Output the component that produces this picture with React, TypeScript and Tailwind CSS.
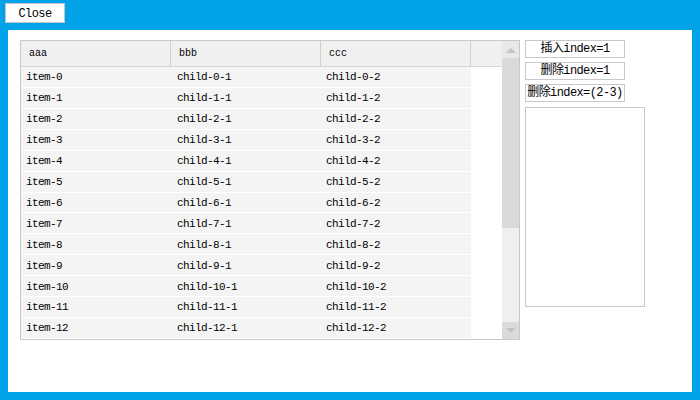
import React from "react";

const mono = { fontFamily: '"Liberation Mono", "Noto Sans CJK SC", monospace' };

const rows = Array.from({ length: 13 }, (_, i) => ({
  a: `item-${i}`,
  b: `child-${i}-1`,
  c: `child-${i}-2`,
}));

function ArrowUp() {
  return (
    <svg width="10" height="6" viewBox="0 0 10 6">
      <path d="M0 6 L5 1 L10 6 Z" fill="#c4c4c4" />
    </svg>
  );
}

function ArrowDown() {
  return (
    <svg width="10" height="6" viewBox="0 0 10 6">
      <path d="M0 0 L10 0 L5 5 Z" fill="#c4c4c4" />
    </svg>
  );
}

function Grid() {
  return (
    <div className="flex h-[300px] w-[500px] border border-[#c8c8c8] bg-white">
      <div className="flex flex-1 flex-col">
        <div className="flex h-[26px] border-b border-[#d6d6d6] bg-[#f0f0f0] text-[10px] text-black">
          {["aaa", "bbb", "ccc"].map((h) => (
            <div
              key={h}
              className="flex w-[150px] items-center border-r border-[#d0d0d0] pl-[8px] pt-[1px]"
            >
              {h}
            </div>
          ))}
          <div className="flex-1" />
        </div>
        {rows.map((r) => (
          <div key={r.a} className="flex h-[21px] border-b border-white text-[11px] tracking-[-0.6px] text-black">
            <div className="flex w-[150px] items-center bg-[#f4f4f4] pl-[5px] pt-[1px]">{r.a}</div>
            <div className="flex w-[150px] items-center bg-[#f4f4f4] pl-[6px] pt-[1px]">{r.b}</div>
            <div className="flex w-[150px] items-center bg-[#f4f4f4] pl-[5px] pt-[1px]">{r.c}</div>
            <div className="flex-1" />
          </div>
        ))}
      </div>
      <div className="flex w-[17px] flex-col bg-[#efefef]">
        <div className="flex h-[17px] items-center justify-center bg-[#e8e8e8]">
          <ArrowUp />
        </div>
        <div className="h-[170px] bg-[#dadada]" />
        <div className="flex-1" />
        <div className="flex h-[17px] items-center justify-center bg-[#dadada]">
          <ArrowDown />
        </div>
      </div>
    </div>
  );
}

function SideButton({ label }: { label: string }) {
  return (
    <button className="flex h-[18px] w-[100px] items-center justify-center whitespace-nowrap border border-[#c8c8c8] bg-white text-[12px] leading-none tracking-[-0.6px] text-black">
      {label}
    </button>
  );
}

export default function App() {
  return (
    <div className="flex h-[400px] w-[700px] flex-col bg-[#00a2e8]" style={mono}>
      <div className="h-[30px] pl-[5px] pt-[3px]">
        <button className="flex h-[20px] w-[60px] items-center justify-center border border-[#c4c4c4] bg-white pt-[1px] text-[12px] tracking-[-0.6px] text-black">
          Close
        </button>
      </div>
      <div className="mx-[8px] flex h-[362px] gap-[5px] bg-white pl-[12px] pt-[10px]">
        <Grid />
        <div className="flex flex-col gap-[4px]">
          <SideButton label="插入index=1" />
          <SideButton label="删除index=1" />
          <SideButton label="删除index=(2-3)" />
          <div className="mt-[1px] h-[200px] w-[120px] border border-[#c8c8c8] bg-white" />
        </div>
      </div>
    </div>
  );
}
